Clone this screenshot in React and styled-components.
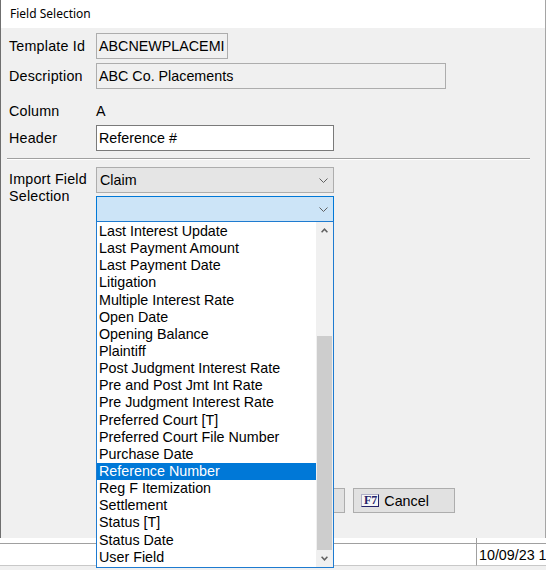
import React from "react";
import styled, { createGlobalStyle } from "styled-components";

const GlobalStyle = createGlobalStyle`
  html, body {
    margin: 0;
    padding: 0;
    background: #ffffff;
  }
  body {
    font-family: "Liberation Sans", Arial, sans-serif;
    font-size: 14.3px;
    color: #000;
  }
  * {
    box-sizing: border-box;
  }
`;

const Screen = styled.div`
  width: 546px;
  height: 570px;
  display: flex;
  flex-direction: column;
  overflow: hidden;
  background: #f0f0f0;
`;

const Dialog = styled.div`
  height: 538px;
  flex: none;
  display: flex;
  flex-direction: column;
  border-left: 1px solid #6f6f6f;
  border-right: 1px solid #a5a5a5;
  position: relative;
  z-index: 2;
`;

const TitleBar = styled.div`
  height: 28px;
  flex: none;
  background: #ffffff;
  display: flex;
  align-items: center;
  padding: 0 0 2px 9px;
  font-family: "Noto Sans", "Open Sans", sans-serif;
  font-size: 12px;
`;

const Body = styled.div`
  flex: 1;
  background: #f0f0f0;
  padding: 5px 0 0 8px;
  display: flex;
  flex-direction: column;
`;

const Row = styled.div`
  display: grid;
  grid-template-columns: 87px auto;
  align-items: ${(p) => (p.$top ? "start" : "center")};
  justify-items: start;
  min-height: 26px;
  margin-top: ${(p) => p.$mt || 0}px;
`;

const Label = styled.div`
  line-height: 17px;
  letter-spacing: 0.2px;
  padding-top: ${(p) => p.$pt || 0}px;
`;

const TextBox = styled.div`
  width: ${(p) => p.$w}px;
  height: 26px;
  border: 1px solid ${(p) => (p.$readOnly ? "#adadad" : "#7a7a7a")};
  background: ${(p) => (p.$readOnly ? "#f0f0f0" : "#ffffff")};
  padding: 0 2px;
  display: flex;
  align-items: center;
`;

const BoxText = styled.span`
  flex: 1;
  white-space: nowrap;
`;

const Separator = styled.div`
  margin: 7px 0 0 -2px;
  width: 523px;
  height: 2px;
  border-top: 1px solid #a0a0a0;
  border-bottom: 1px solid #ffffff;
`;

const ComboStack = styled.div`
  display: flex;
  flex-direction: column;
  gap: 3px;
`;

const Combo = styled.div`
  position: relative;
  width: 238px;
  height: 26px;
  border: 1px solid ${(p) => (p.$open ? "#0078d7" : "#adadad")};
  background: ${(p) => (p.$open ? "#cce4f7" : "#e5e5e5")};
  display: flex;
  align-items: center;
  padding: 0 5px 0 3px;
`;

const ComboValue = styled.span`
  flex: 1;
`;

const DropList = styled.div`
  position: absolute;
  top: 100%;
  left: -1px;
  width: 238px;
  height: 347px;
  border: 1px solid #1e7bd0;
  background: #ffffff;
  display: flex;
  z-index: 5;
`;

const Items = styled.div`
  flex: 1;
  display: flex;
  flex-direction: column;
  padding-top: 1px;
`;

const Item = styled.div`
  height: 17.15px;
  line-height: 17.15px;
  padding-left: 2px;
  white-space: nowrap;
  background: ${(p) => (p.$selected ? "#0078d7" : "transparent")};
  color: ${(p) => (p.$selected ? "#ffffff" : "#000000")};
`;

const ScrollBar = styled.div`
  width: 17px;
  background: #f0f0f0;
  display: flex;
  flex-direction: column;
`;

const ScrollButton = styled.div`
  height: 17px;
  display: flex;
  align-items: center;
  justify-content: center;
`;

const Track = styled.div`
  flex: 1;
  display: flex;
  flex-direction: column;
  justify-content: flex-end;
`;

const Thumb = styled.div`
  margin: 0 1px;
  background: #cdcdcd;
`;

const ButtonRow = styled.div`
  display: flex;
  justify-content: flex-end;
  gap: 8px;
  margin-top: 266px;
  padding-right: 90px;
`;

const Button = styled.div`
  width: 102px;
  height: 25px;
  border: 1px solid #adadad;
  background: #e1e1e1;
  display: flex;
  align-items: center;
  gap: 5px;
  padding-left: 7px;
`;

const KeyCap = styled.span`
  display: inline-flex;
  align-items: center;
  height: 13px;
  padding: 0 1px 0 2px;
  font-family: "Liberation Serif", "Times New Roman", serif;
  font-weight: bold;
  font-size: 12px;
  color: #23236a;
  background: #f6f6f6;
  border-top: 1px solid #b0b0c8;
  border-left: 1px solid #b0b0c8;
  border-right: 1px solid #23236a;
  border-bottom: 1px solid #23236a;
`;

const Underlay = styled.div`
  flex: 1;
  display: grid;
  grid-template-columns: 476px 1fr;
  grid-template-rows: 6px 22px 1fr;
  background: #f0f0f0;
`;

const Cell = styled.div`
  background: #ffffff;
  border-bottom: 1px solid ${(p) => (p.$strong ? "#a0a0a0" : "#c8c8c8")};
  border-left: ${(p) => (p.$divider ? "1px solid #a0a0a0" : "none")};
  display: flex;
  align-items: center;
  overflow: hidden;
  padding-left: 2px;
  white-space: nowrap;
  line-height: 16px;
`;

const Chevron = () => (
  <svg width="9" height="5" viewBox="0 0 9 5">
    <path d="M0.5 0.5 L4.5 4.5 L8.5 0.5" fill="none" stroke="#606060" strokeWidth="1" />
  </svg>
);

const Arrow = ({ up }) => (
  <svg width="7" height="5" viewBox="0 0 7 5">
    <path
      d={up ? "M0.6 4.2 L3.5 1.2 L6.4 4.2" : "M0.6 0.8 L3.5 3.8 L6.4 0.8"}
      fill="none"
      stroke="#606060"
      strokeWidth="1.5"
    />
  </svg>
);

const fields = [
  "Last Interest Update",
  "Last Payment Amount",
  "Last Payment Date",
  "Litigation",
  "Multiple Interest Rate",
  "Open Date",
  "Opening Balance",
  "Plaintiff",
  "Post Judgment Interest Rate",
  "Pre and Post Jmt Int Rate",
  "Pre Judgment Interest Rate",
  "Preferred Court [T]",
  "Preferred Court File Number",
  "Purchase Date",
  "Reference Number",
  "Reg F Itemization",
  "Settlement",
  "Status [T]",
  "Status Date",
  "User Field",
];

const selected = "Reference Number";
const totalFields = 29;
const trackHeight = 311;

export default function App() {
  const thumbHeight = Math.round((trackHeight * fields.length) / totalFields);

  return (
    <>
      <GlobalStyle />
      <Screen>
        <Dialog>
          <TitleBar>Field Selection</TitleBar>
          <Body>
            <Row>
              <Label>Template Id</Label>
              <TextBox $w={132} $readOnly>
                <BoxText>ABCNEWPLACEMI</BoxText>
              </TextBox>
            </Row>
            <Row $mt={4}>
              <Label>Description</Label>
              <TextBox $w={350} $readOnly>
                <BoxText>ABC Co. Placements</BoxText>
              </TextBox>
            </Row>
            <Row $mt={9}>
              <Label>Column</Label>
              <Label>A</Label>
            </Row>
            <Row $mt={1}>
              <Label>Header</Label>
              <TextBox $w={238}>
                <BoxText>Reference #</BoxText>
              </TextBox>
            </Row>
            <Separator />
            <Row $mt={7} $top>
              <Label $pt={4}>
                Import Field
                <br />
                Selection
              </Label>
              <ComboStack>
                <Combo>
                  <ComboValue>Claim</ComboValue>
                  <Chevron />
                </Combo>
                <Combo $open>
                  <ComboValue />
                  <Chevron />
                  <DropList>
                    <Items>
                      {fields.map((f) => (
                        <Item key={f} $selected={f === selected}>
                          {f}
                        </Item>
                      ))}
                    </Items>
                    <ScrollBar>
                      <ScrollButton>
                        <Arrow up />
                      </ScrollButton>
                      <Track>
                        <Thumb style={{ height: thumbHeight }} />
                      </Track>
                      <ScrollButton>
                        <Arrow />
                      </ScrollButton>
                    </ScrollBar>
                  </DropList>
                </Combo>
              </ComboStack>
            </Row>
            <ButtonRow>
              <Button />
              <Button>
                <KeyCap>F7</KeyCap>
                Cancel
              </Button>
            </ButtonRow>
          </Body>
        </Dialog>
        <Underlay>
          <Cell $strong />
          <Cell $strong $divider />
          <Cell />
          <Cell $divider>10/09/23 1</Cell>
        </Underlay>
      </Screen>
    </>
  );
}
